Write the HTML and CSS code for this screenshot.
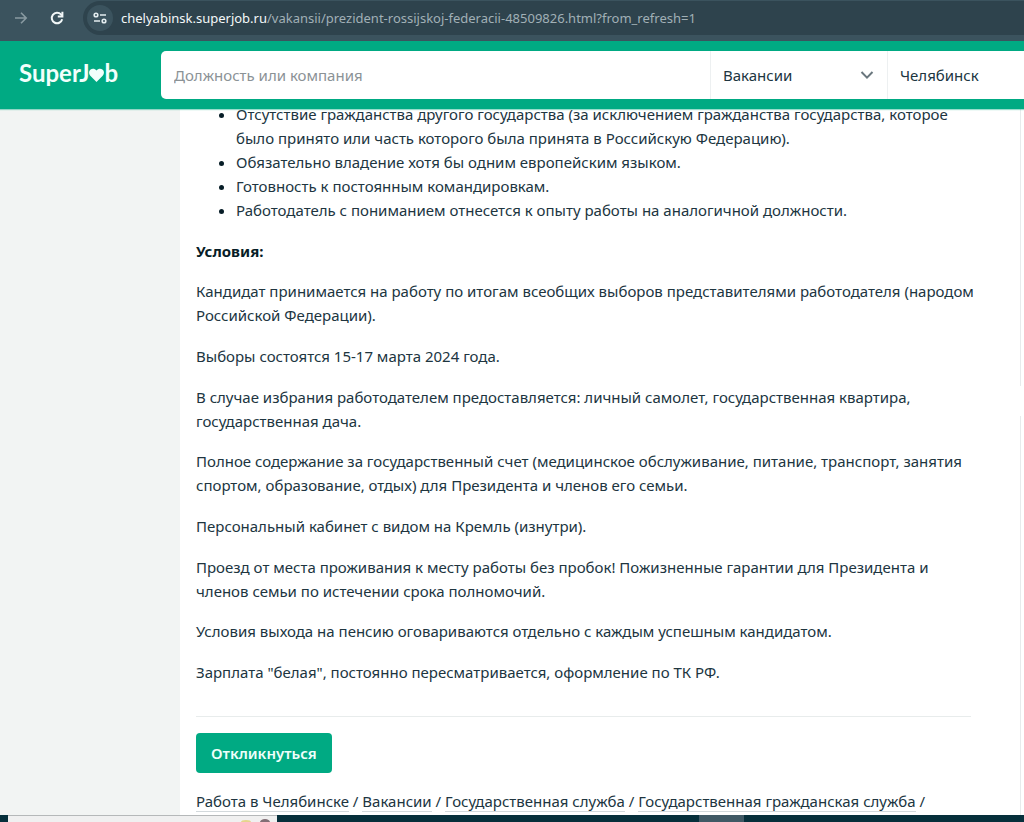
FILE: index.html
```html
<!DOCTYPE html>
<html lang="ru">
<head>
<meta charset="utf-8">
<meta name="viewport" content="width=device-width, initial-scale=1">
<title>Вакансия — SuperJob</title>
<link rel="stylesheet" href="styles.css">
</head>
<body>
<div class="screen">
  <div class="browser">
    <button class="nav nav-forward" type="button" aria-label="Вперёд">
      <svg width="16" height="16" viewBox="0 0 16 16" fill="none" stroke="currentColor" stroke-width="1.6"><path d="M2 8h11M8 2.8 13.2 8 8 13.2"/></svg>
    </button>
    <button class="nav" type="button" aria-label="Обновить">
      <svg width="16" height="16" viewBox="0 0 16 16" fill="none" stroke="currentColor" stroke-width="2"><path d="M13.2 9.3A5.3 5.3 0 1 1 12 4.4L13 5.6"/><path d="M13.4 1.8v4.6H8.8"/></svg>
    </button>
    <div class="address">
      <button class="site-info" type="button" aria-label="Сведения о сайте">
        <svg width="16" height="16" viewBox="0 0 16 16" fill="none" stroke="currentColor" stroke-width="1.6"><circle cx="4" cy="5" r="1.8"/><path d="M8 5h6M2 11h6"/><circle cx="12" cy="11" r="1.8"/></svg>
      </button>
      <div class="url"><span class="url-host">chelyabinsk.superjob.ru</span>/vakansii/prezident-rossijskoj-federacii-48509826.html?from_refresh=1</div>
    </div>
  </div>

  <header class="header">
    <a class="logo" href="#" aria-label="SuperJob">SuperJ<svg class="heart" width="15" height="14" viewBox="0 0 15 14" fill="currentColor"><path d="M7.5 14 1.3 7.7C-.4 5.9-.3 3.2 1.3 1.7 3 .1 5.9.2 7.5 2.6 9.1.2 12 .1 13.7 1.7c1.6 1.5 1.7 4.2 0 6z"/></svg>b</a>
    <form class="search">
      <input class="query" type="text" placeholder="Должность или компания" aria-label="Должность или компания">
      <div class="kind">
        <select class="kind-select" aria-label="Раздел"><option>Вакансии</option></select>
        <svg class="chevron" width="14" height="10" viewBox="0 0 14 10" fill="none" stroke="currentColor" stroke-width="2"><path d="M1.5 2 7 7.6 12.5 2"/></svg>
      </div>
      <button class="city" type="button">Челябинск</button>
    </form>
  </header>

  <main class="page">
    <article class="vacancy">
      <div class="description">
        <ul class="requirements">
          <li>Отсутствие гражданства другого государства (за исключением гражданства государства, которое<br>было принято или часть которого была принята в Российскую Федерацию).</li>
          <li>Обязательно владение хотя бы одним европейским языком.</li>
          <li>Готовность к постоянным командировкам.</li>
          <li>Работодатель с пониманием отнесется к опыту работы на аналогичной должности.</li>
        </ul>
        <h2>Условия:</h2>
        <p>Кандидат принимается на работу по итогам всеобщих выборов представителями работодателя (народом<br>Российской Федерации).</p>
        <p>Выборы состоятся 15-17 марта 2024 года.</p>
        <p>В случае избрания работодателем предоставляется: личный самолет, государственная квартира,<br>государственная дача.</p>
        <p>Полное содержание за государственный счет (медицинское обслуживание, питание, транспорт, занятия<br>спортом, образование, отдых) для Президента и членов его семьи.</p>
        <p>Персональный кабинет с видом на Кремль (изнутри).</p>
        <p>Проезд от места проживания к месту работы без пробок! Пожизненные гарантии для Президента и<br>членов семьи по истечении срока полномочий.</p>
        <p>Условия выхода на пенсию оговариваются отдельно с каждым успешным кандидатом.</p>
        <p>Зарплата "белая", постоянно пересматривается, оформление по ТК РФ.</p>
      </div>
      <div class="actions"><button class="respond" type="button">Откликнуться</button></div>
      <nav class="crumbs" aria-label="Разделы"><a href="#">Работа в Челябинске</a> / <a href="#">Вакансии</a> / <a href="#">Государственная служба</a> / <a href="#">Государственная гражданская служба</a> /</nav>
    </article>
    <div class="edge"><div class="edge-part"></div><div class="edge-part edge-rest"></div></div>
  </main>

  <div class="taskbar">
    <div class="task-window">
      <svg width="40" height="6" viewBox="0 0 40 6"><ellipse cx="9" cy="6" rx="5" ry="2" fill="#e5d58c"/><ellipse cx="28" cy="6" rx="5" ry="3" fill="#826e75"/></svg>
    </div>
    <div class="task-active"></div>
  </div>
</div>
</body>
</html>
```
FILE: styles.css
```css
* { box-sizing: border-box; }
body {
  margin: 0;
  background: #f2f4f3;
  color: #20353f;
  font: 15px/24px "Noto Sans", "Open Sans", sans-serif;
}
button, input, select {
  margin: 0;
  padding: 0;
  border: 0;
  background: none;
  color: inherit;
  font: inherit;
}
.screen { display: flex; flex-direction: column; height: 100vh; overflow: hidden; }

.browser {
  display: flex;
  flex: none;
  align-items: center;
  gap: 16px;
  height: 41px;
  padding: 0 0 5px 11px;
  background: #3b535e;
}
.nav { display: flex; justify-content: center; width: 20px; color: #f2f7f8; }
.nav-forward { color: #899aa1; }
.address {
  display: flex;
  flex: 1;
  align-items: center;
  gap: 8px;
  min-width: 0;
  height: 34px;
  padding-left: 4px;
  border-radius: 17px 0 0 17px;
  background: #2e434d;
}
.site-info {
  display: flex;
  flex: none;
  align-items: center;
  justify-content: center;
  width: 26px;
  height: 26px;
  border-radius: 50%;
  background: #3b535e;
  color: #e4edf0;
}
.url { overflow: hidden; color: #a1b0b6; font-size: 13px; white-space: nowrap; }
.url-host { color: #f4f8f9; }

.header {
  display: flex;
  flex: none;
  align-items: center;
  height: 68px;
  background: #00aa83;
  box-shadow: 0 1px 1px #00aa8366;
  z-index: 1;
}
.logo {
  flex: none;
  width: 161px;
  padding: 0 0 4px 19px;
  color: #f2fffc;
  font: 700 24px/30px Lato, sans-serif;
  text-decoration: none;
}
.search {
  display: flex;
  flex: 1;
  height: 48px;
  min-width: 0;
  border-radius: 5px 0 0 5px;
  background: #fff;
}
.query { flex: 1; min-width: 0; padding: 0 13px; outline: 0; }
.query::placeholder { color: #8b9296; opacity: 1; }
.kind {
  display: grid;
  flex: none;
  align-items: center;
  width: 178px;
  border: solid #edf0f1;
  border-width: 0 1px;
}
.kind-select { grid-area: 1 / 1; height: 48px; padding-left: 12px; appearance: none; outline: 0; }
.chevron { grid-area: 1 / 1; justify-self: end; margin-right: 13px; color: #6a777e; pointer-events: none; }
.city { flex: none; width: 136px; padding-left: 12px; text-align: left; }

.page { display: flex; flex: 1; min-height: 0; overflow: hidden; padding-left: 180px; }
.vacancy {
  display: flex;
  flex: 1;
  flex-direction: column;
  min-width: 0;
  margin-top: -7px;
  padding: 0 49px 0 16px;
  background: #fff;
}
.description {
  display: flex;
  flex: 1;
  flex-direction: column;
  justify-content: space-between;
  padding-bottom: 32px;
  border-bottom: 1px solid #e8ecec;
  white-space: nowrap;
}
.description p, .description h2, .requirements { margin: 0; }
.description h2 { font-size: 15px; line-height: 24px; color: #071d27; }
.requirements { padding-left: 40px; }
.requirements li::marker { color: #071d27; }
.actions { flex: none; padding: 16px 0; }
.respond {
  display: block;
  height: 40px;
  padding: 0 15px;
  border-radius: 4px;
  background: #00aa83;
  color: #effffb;
  font-weight: 600;
}
.crumbs { flex: none; height: 26px; white-space: nowrap; }
.crumbs a { color: inherit; text-decoration: none; border-bottom: 1px solid #d3d9dc; }
.edge { display: flex; flex: none; flex-direction: column; gap: 30px; width: 4px; background: #fff; }
.edge-part { height: 277px; border-left: 1px solid #e7ebec; }
.edge-rest { flex: 1; }

.taskbar { display: flex; flex: none; height: 7px; padding-left: 8px; background: #062f3b; }
.task-window {
  display: flex;
  justify-content: flex-end;
  width: 269px;
  border-top: 1px solid #b5b8b9;
  background: #f0f0f0;
}
.task-active { width: 45px; margin-left: 422px; background: #405965; }
```
